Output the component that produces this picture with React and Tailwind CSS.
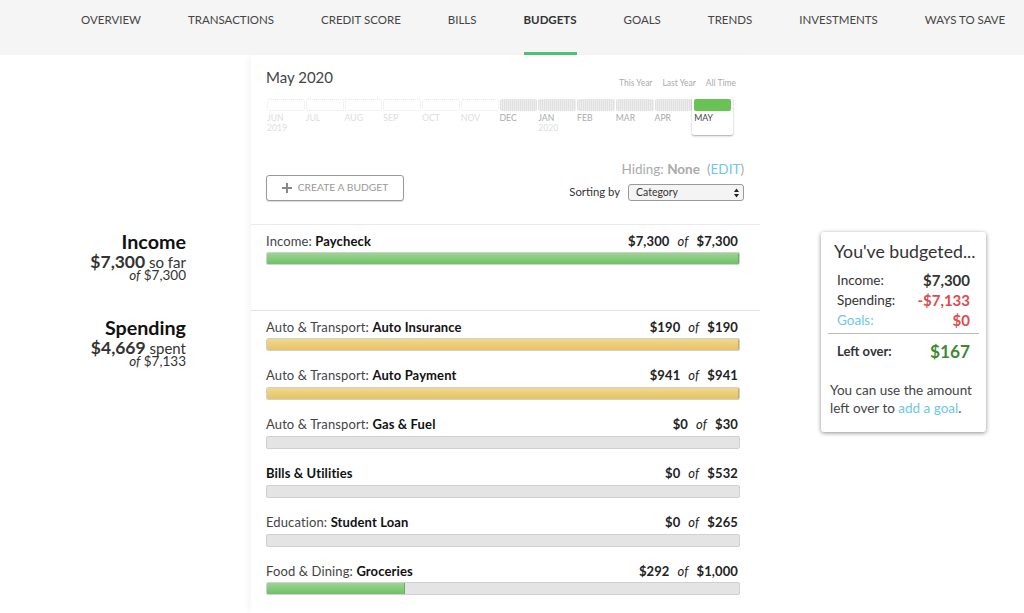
import React from "react";

const tabs = ["OVERVIEW", "TRANSACTIONS", "CREDIT SCORE", "BILLS", "BUDGETS", "GOALS", "TRENDS", "INVESTMENTS", "WAYS TO SAVE"];

const months = [
  { name: "JUN", year: "2019" },
  { name: "JUL" },
  { name: "AUG" },
  { name: "SEP" },
  { name: "OCT" },
  { name: "NOV" },
  { name: "DEC", filled: true },
  { name: "JAN", year: "2020", filled: true },
  { name: "FEB", filled: true },
  { name: "MAR", filled: true },
  { name: "APR", filled: true },
];

const spending = [
  { cat: "Auto & Transport:", name: "Auto Insurance", spent: "$190", total: "$190", pct: 100, color: "yellow" },
  { cat: "Auto & Transport:", name: "Auto Payment", spent: "$941", total: "$941", pct: 100, color: "yellow" },
  { cat: "Auto & Transport:", name: "Gas & Fuel", spent: "$0", total: "$30", pct: 0 },
  { name: "Bills & Utilities", spent: "$0", total: "$532", pct: 0 },
  { cat: "Education:", name: "Student Loan", spent: "$0", total: "$265", pct: 0 },
  { cat: "Food & Dining:", name: "Groceries", spent: "$292", total: "$1,000", pct: 29.2, color: "green" },
];

function BudgetRow({ row }) {
  return (
    <div className="h-[48.9px] pr-5 pl-[15px]">
      <div className="flex h-[22px] items-center justify-between pr-[2px] text-[13px] leading-none tracking-[0.12px] text-[#444]">
        <div>
          {row.cat && <span>{row.cat} </span>}
          <span className="font-bold text-[#111]">{row.name}</span>
        </div>
        <div className="font-bold text-[#222]">
          {row.spent}
          <span className="mx-[8px] font-normal italic">of</span>
          {row.total}
        </div>
      </div>
      <div className="h-[13px] overflow-hidden rounded-[2px] border border-[#d0d0d0] bg-[#e4e4e4]">
        {row.pct > 0 && (
          <div
            className={
              row.color === "yellow"
                ? "h-full border-r border-[#d0ac50] bg-gradient-to-b from-[#f0d88f] to-[#e6c362]"
                : "h-full border-r border-[#63b25b] bg-gradient-to-b from-[#9bd592] to-[#70c067]"
            }
            style={{ width: `${row.pct}%` }}
          />
        )}
      </div>
    </div>
  );
}

function Summary({ title, amount, word, total, className }) {
  return (
    <div className={className}>
      <div className="text-[19.7px] leading-[25px] font-bold text-[#111]">{title}</div>
      <div className="text-[15px] leading-[16px] text-[#333]">
        <span className="text-[17.5px] font-bold">{amount}</span> {word}
      </div>
      <div className="text-[13.5px] leading-[11px] text-[#333]">
        <span className="italic">of</span> {total}
      </div>
    </div>
  );
}

export default function App() {
  return (
    <div className="h-[613px] w-[1024px] overflow-hidden bg-white font-['Lato','Noto_Sans',sans-serif]">
      <nav className="flex h-[55px] gap-[47px] bg-[#f5f5f5] pl-[81px]">
        {tabs.map((tab) => (
          <div
            key={tab}
            className={
              tab === "BUDGETS"
                ? "h-full border-b-[3px] border-[#4cc373] pt-[13px] text-[11.5px] leading-[14px] font-bold whitespace-nowrap text-[#333]"
                : "h-full pt-[13px] text-[11.5px] leading-[14px] whitespace-nowrap text-[#444]"
            }
          >
            {tab}
          </div>
        ))}
      </nav>

      <div className="flex">
        {/* left summaries */}
        <div className="w-[251px] pt-[174px] pr-[65px] text-right">
          <Summary title="Income" amount="$7,300" word="so far" total="$7,300" className="h-[86px]" />
          <Summary title="Spending" amount="$4,669" word="spent" total="$7,133" />
        </div>

        {/* main panel */}
        <div className="h-[558px] w-[509px] bg-white shadow-[-6px_0_6px_-2px_rgba(0,0,0,0.03)]">
          <div className="h-[169px] pr-4 pl-[15px]">
            <div className="flex items-start justify-between pt-[13px] pr-2">
              <div className="text-[15px] leading-[18px] text-[#444]">May 2020</div>
              <div className="flex gap-[10px] pt-[9px] text-[8.5px] leading-[12px] text-[#aaa]">
                <span>This Year</span>
                <span>Last Year</span>
                <span>All Time</span>
              </div>
            </div>

            <div className="mt-[10px] flex pl-px">
              {months.map((m) => (
                <div key={m.name} className="w-[38.75px] pr-px">
                  <div
                    className={
                      m.filled
                        ? "h-[12px] rounded-[2px] bg-[repeating-linear-gradient(90deg,#e0e0e0_0,#e0e0e0_1px,#eeeeee_1px,#eeeeee_2px)]"
                        : "h-[12px] rounded-[2px] border border-dotted border-[#e6e6e6]"
                    }
                  />
                  <div
                    className={
                      m.filled
                        ? "mt-[2px] text-[8.7px] leading-[10px] text-[#aaa]"
                        : "mt-[2px] text-[8.7px] leading-[10px] text-[#ddd]"
                    }
                  >
                    {m.name}
                    {m.year && <div className="text-[#ddd]">{m.year}</div>}
                  </div>
                </div>
              ))}
              <div className="-mt-[2px] -ml-px h-[38px] w-[41px] rounded-[2px] bg-white p-[2px] shadow-[0_1px_2px_rgba(0,0,0,0.35)]">
                <div className="h-[12px] rounded-[2px] bg-[#68c254]" />
                <div className="mt-[2px] text-[8.7px] leading-[10px] text-[#444]">MAY</div>
              </div>
            </div>

            <div className="mt-[26px] flex items-end justify-between">
              <button className="flex h-[26px] w-[138px] items-center justify-center gap-[6px] rounded-[3px] border border-[#999] bg-white text-[10.3px] text-[#999] shadow-[0_1px_1px_rgba(0,0,0,0.15)]">
                <svg width="10" height="10" viewBox="0 0 10 10">
                  <path d="M4 0h2v4h4v2H6v4H4V6H0V4h4z" fill="#888" />
                </svg>
                CREATE A BUDGET
              </button>
              <div className="flex flex-col items-end">
                <div className="text-[13.5px] leading-[16px] text-[#aaa]">
                  Hiding: <span className="font-bold">None</span>
                  <span className="ml-[7px]">
                    (<span className="text-[#6cc8e8]">EDIT</span>)
                  </span>
                </div>
                <div className="mt-[7px] flex items-center gap-[8px]">
                  <span className="text-[11.3px] text-[#333]">Sorting by</span>
                  <div className="flex h-[17px] w-[116px] items-center justify-between rounded-[3px] border border-[#999] bg-[#f4f4f4] pr-[4px] pl-[7px] text-[10.5px] text-[#333]">
                    Category
                    <svg width="5" height="10" viewBox="0 0 5 10">
                      <path d="M2.5 0.5 5 4H0zM0 6h5L2.5 9.5z" fill="#222" />
                    </svg>
                  </div>
                </div>
              </div>
            </div>
          </div>

          <div className="h-[86px] border-t border-[#eaeaea] pt-[5px]">
            <BudgetRow row={{ cat: "Income:", name: "Paycheck", spent: "$7,300", total: "$7,300", pct: 100, color: "green" }} />
          </div>

          <div className="border-t border-[#e2e2e2] pt-[5px]">
            {spending.map((row) => (
              <BudgetRow key={row.name} row={row} />
            ))}
          </div>
        </div>

        {/* right card */}
        <div className="pt-[177px] pl-[61px]">
          <div className="h-[200px] w-[165px] rounded-[3px] bg-white px-[7px] pt-[11px] text-[#333] shadow-[0_1px_4px_rgba(0,0,0,0.45)]">
            <div className="pl-[6px] text-[17.7px] leading-[18px] whitespace-nowrap text-[#333]">You've budgeted...</div>
            <div className="mt-[9px] px-[9px] text-[13.5px] leading-[20px]">
              <div className="flex justify-between">
                <span>Income:</span>
                <span className="text-[15px] font-bold">$7,300</span>
              </div>
              <div className="flex justify-between">
                <span>Spending:</span>
                <span className="text-[15px] font-bold text-[#e04b4b]">-$7,133</span>
              </div>
              <div className="flex justify-between">
                <span className="text-[#6cc8e8]">Goals:</span>
                <span className="text-[15px] font-bold text-[#e04b4b]">$0</span>
              </div>
            </div>
            <div className="mt-[3px] flex items-center justify-between border-t border-[#bbb] px-[9px] pt-[7px]">
              <span className="text-[13px] font-bold">Left over:</span>
              <span className="text-[17.3px] leading-[22px] font-bold text-[#3f8a34]">$167</span>
            </div>
            <div className="mt-[18px] pl-[2px] text-[13.5px] leading-[18px] text-[#444]">
              <div>You can use the amount</div>
              <div>
                left over to <span className="text-[#6cc8e8]">add a goal</span>.
              </div>
            </div>
          </div>
        </div>
      </div>
    </div>
  );
}
